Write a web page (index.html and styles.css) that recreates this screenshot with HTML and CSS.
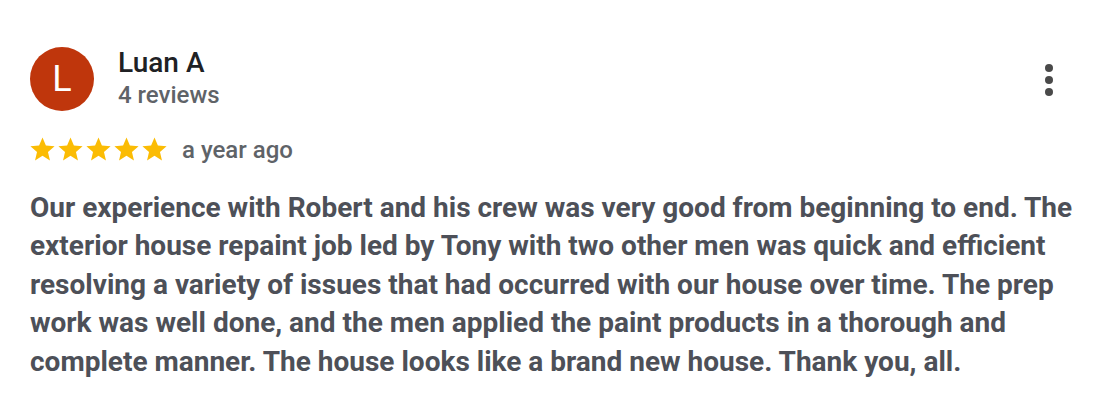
FILE: index.html
```html
<!DOCTYPE html>
<html lang="en">
<head>
    <meta charset="UTF-8">
    <meta name="viewport" content="width=device-width, initial-scale=1.0">
    <title>Review | Luan A</title>
    <link rel="stylesheet" href="styles.css">
</head>
<body>

    <div class="review">
        <div class="review-head">
            <div class="avatar">L</div>
            <div class="author">
                <div class="author-name">Luan A</div>
                <div class="author-count">4 reviews</div>
            </div>
            <button class="more" type="button" aria-label="More options">
                <svg viewBox="0 0 24 24" width="48" height="48">
                    <circle cx="12" cy="6" r="2"/>
                    <circle cx="12" cy="12" r="2"/>
                    <circle cx="12" cy="18" r="2"/>
                </svg>
            </button>
        </div>

        <div class="rating">
            <span class="stars">
                <svg viewBox="0 0 24 24"><path d="M12 17.27L18.18 21l-1.64-7.03L22 9.24l-7.19-.61L12 2 9.19 8.63 2 9.24l5.46 4.73L5.82 21z"/></svg>
                <svg viewBox="0 0 24 24"><path d="M12 17.27L18.18 21l-1.64-7.03L22 9.24l-7.19-.61L12 2 9.19 8.63 2 9.24l5.46 4.73L5.82 21z"/></svg>
                <svg viewBox="0 0 24 24"><path d="M12 17.27L18.18 21l-1.64-7.03L22 9.24l-7.19-.61L12 2 9.19 8.63 2 9.24l5.46 4.73L5.82 21z"/></svg>
                <svg viewBox="0 0 24 24"><path d="M12 17.27L18.18 21l-1.64-7.03L22 9.24l-7.19-.61L12 2 9.19 8.63 2 9.24l5.46 4.73L5.82 21z"/></svg>
                <svg viewBox="0 0 24 24"><path d="M12 17.27L18.18 21l-1.64-7.03L22 9.24l-7.19-.61L12 2 9.19 8.63 2 9.24l5.46 4.73L5.82 21z"/></svg>
            </span>
            <span class="date">a year ago</span>
        </div>

        <p class="review-text">Our experience with Robert and his crew was very good from beginning to end. The exterior house repaint job led by Tony with two other men was quick and efficient resolving a variety of issues that had occurred with our house over time. The prep work was well done, and the men applied the paint products in a thorough and complete manner. The house looks like a brand new house. Thank you, all.</p>
    </div>

</body>
</html>
```

FILE: styles.css
```css
body {
    font-family: Roboto, Arial, sans-serif;
    margin: 0;
    padding: 0;
    background-color: white;
}

.review {
    padding: 47px 20px 0 30px;
}

.review-head {
    display: flex;
    align-items: flex-start;
    gap: 24px;
    padding-right: 9px;
}

.avatar {
    width: 64px;
    height: 64px;
    border-radius: 50%;
    background-color: #bf360c;
    color: white;
    font-size: 36px;
    line-height: 64px;
    text-align: center;
    flex-shrink: 0;
}

.author {
    flex: 1;
}

.author-name {
    font-size: 28px;
    font-weight: 500;
    color: #202124;
    line-height: 32px;
}

.author-count {
    font-size: 24px;
    font-weight: 500;
    color: #5f6368;
    line-height: 32px;
}

.more {
    background: none;
    border: none;
    padding: 0;
    margin-top: 9px;
    fill: #4a4a4a;
    cursor: pointer;
}

.more svg {
    display: block;
}

.rating {
    display: flex;
    align-items: center;
    height: 29px;
    margin-top: 24px;
    margin-left: -2px;
    gap: 14px;
}

.stars {
    display: flex;
}

.stars svg {
    width: 29px;
    height: 29px;
    fill: #fbbc04;
    margin-right: -1px;
}

.date {
    font-size: 24px;
    font-weight: 500;
    color: #5f6368;
}

.review-text {
    margin: 25px 0 0;
    font-size: 28px;
    font-weight: 700;
    line-height: 38.4px;
    color: #4d5058;
}
```
